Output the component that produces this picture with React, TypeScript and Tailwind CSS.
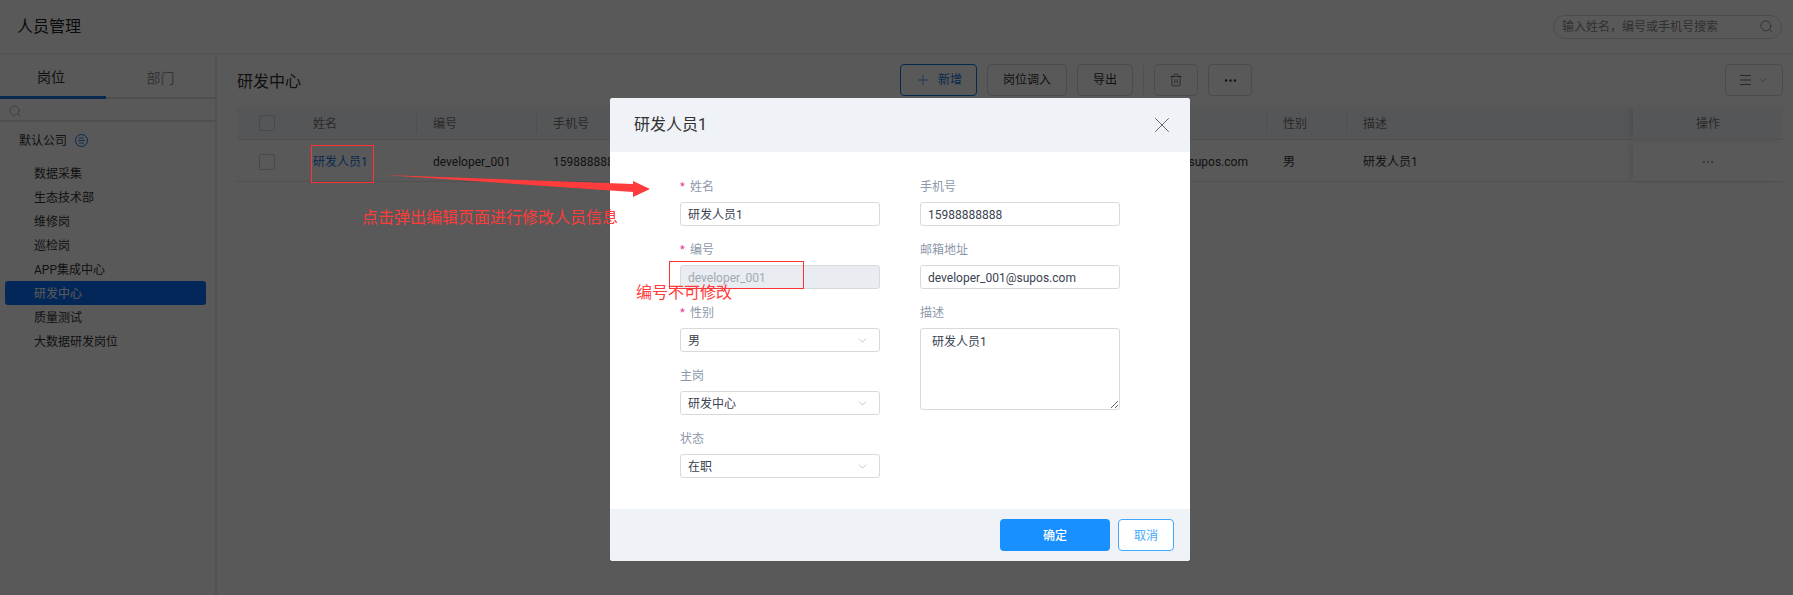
import React from "react";
import { ChevronDown, Ellipsis, Plus, Search, Trash2, X } from "lucide-react";

const font = { fontFamily: 'Roboto,"Noto Sans CJK SC",sans-serif' };

const items = ["数据采集", "生态技术部", "维修岗", "巡检岗", "APP集成中心", "研发中心", "质量测试", "大数据研发岗位"];

function Btn({ className = "", children }: { className?: string; children: React.ReactNode }) {
  return (
    <div className={`h-8 flex items-center justify-center rounded border text-xs ${className}`}>
      {children}
    </div>
  );
}

function Field({ label, required, children }: { label: string; required?: boolean; children: React.ReactNode }) {
  return (
    <div className="w-[200px] mb-[15px]">
      <div className="h-6 pb-[7px] flex items-center text-xs leading-4 text-[#8c98aa]">
        {required && <span className="w-[10px] text-[#eb2f96] text-[11px]">*</span>}
        {label}
      </div>
      {children}
    </div>
  );
}

function Input({ value, disabled }: { value: string; disabled?: boolean }) {
  return (
    <div
      className={`h-6 pl-[7px] pr-2 pt-px flex items-center rounded-[3px] border border-[#d9d9d9] text-xs ${
        disabled ? "bg-[#e9ecf0] text-[#a3a9b3]" : "bg-white text-[#3a4250]"
      }`}
    >
      {value}
    </div>
  );
}

function Select({ value }: { value: string }) {
  return (
    <div className="h-6 pl-[7px] pr-[10px] pt-px flex items-center justify-between rounded-[3px] border border-[#d9d9d9] bg-white text-xs text-[#3a4250]">
      {value}
      <ChevronDown size={13} strokeWidth={1} className="text-[#9a9a9a]" />
    </div>
  );
}

export default function App() {
  return (
    <div className="relative w-[1793px] h-[595px] overflow-hidden bg-white" style={font}>
      {/* Page */}
      <div className="h-[54px] px-[17px] pr-[11px] flex items-center justify-between border-b border-[#e8e8e8]">
        <div className="text-base text-[#222]">人员管理</div>
        <div className="w-[229px] h-6 pl-2 pr-[7px] flex items-center justify-between rounded-full border border-[#d5d9e0] text-xs text-[#8a8a8a]">
          输入姓名，编号或手机号搜索
          <Search size={15} strokeWidth={1.1} className="text-[#666]" />
        </div>
      </div>
      <div className="flex h-[541px]">
        <div className="w-[217px] shrink-0 border-r-2 border-[#ececec]">
          <div className="h-[45px] flex border-b-2 border-[#e2e2e2] text-sm">
            <div className="w-[106px] -mb-0.5 pt-1 pr-1 flex items-center justify-center border-b-[3px] border-[#1677e0] text-[#333]">岗位</div>
            <div className="w-[109px] pt-1 flex items-center justify-center text-[#999]">部门</div>
          </div>
          <div className="h-[23px] pl-2 pt-[2px] flex items-center border-b-2 border-[#e2e2e2]">
            <Search size={14} strokeWidth={1} className="text-[#888]" />
          </div>
          <div className="h-[37px] pl-[19px] flex items-center gap-2 text-xs text-[#333]">
            默认公司
            <span className="w-[13px] h-[13px] flex items-center justify-center rounded-full border border-[#1677e0] text-[#1677e0]">
              <svg width="9" height="9" viewBox="0 0 9 9" fill="none" stroke="currentColor" strokeWidth="0.9">
                <path d="M2 2h5M1 4.5h7M2 7h5" />
              </svg>
            </span>
          </div>
          <div className="pt-[2px] flex flex-col">
            {items.map((t, i) => (
              <div
                key={t}
                className={`h-6 ml-[5px] w-[201px] pl-[29px] pt-[2px] flex items-center rounded-[3px] text-xs ${
                  i === 5 ? "bg-[#0d71ff] text-white" : "text-[#333]"
                }`}
              >
                {t}
              </div>
            ))}
          </div>
        </div>

        <div className="flex-1 pl-5 pr-[10px]">
          <div className="h-[53px] pt-[10px] flex items-start">
            <div className="h-8 pt-[3px] flex items-center text-base text-[#333] w-[663px]">研发中心</div>
            <div className="flex items-center gap-[10px]">
              <Btn className="w-[77px] gap-[7px] border-[#1677e0] text-[#1677e0]">
                <Plus size={16} strokeWidth={1} />
                新增
              </Btn>
              <Btn className="w-20 border-[#d5d9e0] text-[#333]">岗位调入</Btn>
              <Btn className="w-14 border-[#d5d9e0] text-[#333]">导出</Btn>
              <div className="w-px h-[30px] bg-[#e8e8e8]" />
              <Btn className="w-11 border-[#d5d9e0] text-[#333]">
                <Trash2 size={14} strokeWidth={1.1} />
              </Btn>
              <Btn className="w-11 border-[#d5d9e0] text-[#333]">
                <Ellipsis size={15} strokeWidth={2} />
              </Btn>
            </div>
            <Btn className="w-[58px] ml-auto gap-[6px] border-[#d5d9e0] text-[#777]">
              <svg width="11" height="10" viewBox="0 0 11 10" fill="none" stroke="currentColor" strokeWidth="1">
                <path d="M0 0.5h11M0 5h11M0 9.5h11" />
              </svg>
              <ChevronDown size={12} strokeWidth={1.1} />
            </Btn>
          </div>

          <div className="relative text-xs">
            <div className="h-[33px] flex items-center bg-[#f2f5f9] border-b border-[#e4e6ea] text-[#777]">
              <div className="w-[60px] pl-[22px]">
                <div className="w-4 h-4 rounded-[2px] border border-[#d0d0d0]" />
              </div>
              <div className="w-[120px] h-5 pl-4 pt-[2px] flex items-center border-r border-[#e0e3e8]">姓名</div>
              <div className="w-[120px] h-5 pl-4 pt-[2px] flex items-center border-r border-[#e0e3e8]">编号</div>
              <div className="w-[730px] h-5 pl-4 pt-[2px] flex items-center border-r border-[#e0e3e8]">手机号</div>
              <div className="w-20 h-5 pl-4 pt-[2px] flex items-center border-r border-[#e0e3e8]">性别</div>
              <div className="flex-1 h-5 pl-4 pt-[2px] flex items-center">描述</div>
              <div className="w-[150px] h-[33px] pt-[2px] flex items-center justify-center shadow-[-4px_0_6px_-2px_rgba(0,0,0,0.12)]">操作</div>
            </div>
            <div className="h-[42px] pt-[2px] flex items-center border-b border-[#e4e6ea] text-[#333]">
              <div className="w-[60px] pl-[22px]">
                <div className="w-4 h-4 rounded-[2px] border border-[#d0d0d0]" />
              </div>
              <div className="w-[120px] pl-4 text-[#1677e0]">研发人员1</div>
              <div className="w-[120px] pl-4">developer_001</div>
              <div className="w-[547px] pl-4">15988888888</div>
              <div className="w-[183px] pl-4">developer_001@supos.com</div>
              <div className="w-20 pl-4">男</div>
              <div className="flex-1 pl-4">研发人员1</div>
              <div className="w-[150px] h-[39px] flex items-center justify-center text-[#aaa] shadow-[-4px_0_6px_-2px_rgba(0,0,0,0.12)]">
                <Ellipsis size={14} />
              </div>
            </div>
          </div>
        </div>
      </div>

      {/* Mask */}
      <div className="absolute inset-0 bg-black/65" />

      {/* Dialog */}
      <div className="absolute left-[610px] top-[98px] w-[580px] h-[463px] rounded-[3px] overflow-hidden bg-white flex flex-col">
        <div className="h-[54px] pl-6 pr-[15px] flex items-center justify-between bg-[#eff2f7]">
          <div className="text-base text-[#333]">研发人员1</div>
          <X size={26} strokeWidth={0.9} className="text-[#666]" />
        </div>
        <div className="h-[357px] pl-[70px] pt-[26px] flex gap-10">
          <div>
            <Field label="姓名" required>
              <Input value="研发人员1" />
            </Field>
            <Field label="编号" required>
              <Input value="developer_001" disabled />
            </Field>
            <Field label="性别" required>
              <Select value="男" />
            </Field>
            <Field label="主岗">
              <Select value="研发中心" />
            </Field>
            <Field label="状态">
              <Select value="在职" />
            </Field>
          </div>
          <div>
            <Field label="手机号">
              <Input value="15988888888" />
            </Field>
            <Field label="邮箱地址">
              <Input value="developer_001@supos.com" />
            </Field>
            <Field label="描述">
              <textarea
                readOnly
                value="研发人员1"
                className="block w-[200px] h-[82px] pl-[11px] pr-3 py-[5px] rounded-[3px] border border-[#d9d9d9] text-xs text-[#3a4250] outline-none"
              />
            </Field>
          </div>
        </div>
        <div className="flex-1 pr-4 pt-[10px] flex justify-end gap-2 bg-[#eff2f7] text-xs">
          <div className="w-[110px] h-8 pt-[2px] flex items-center justify-center rounded bg-[#1890ff] text-white font-medium">确定</div>
          <div className="w-14 h-8 pt-[2px] flex items-center justify-center rounded border border-[#40a9ff] bg-white text-[#40a9ff]">取消</div>
        </div>
      </div>

      {/* Annotations */}
      <div className="absolute left-[311px] top-[145px] w-[63px] h-[38px] border border-[#ff3333]" />
      <svg className="absolute left-[380px] top-[170px]" width="275" height="30" viewBox="0 0 275 30">
        <polygon points="5,5 253,14 253,11 270,19 253,27 253,22" fill="#ff3b3b" />
      </svg>
      <div className="absolute left-[362px] top-[206px] text-base leading-6 text-[#ff3b3b] whitespace-nowrap">点击弹出编辑页面进行修改人员信息</div>
      <div className="absolute left-[669px] top-[261px] w-[135px] h-[28px] border border-[#ff3333]" />
      <div className="absolute left-[636px] top-[281px] text-base leading-6 text-[#ff3b3b] whitespace-nowrap">编号不可修改</div>
    </div>
  );
}
